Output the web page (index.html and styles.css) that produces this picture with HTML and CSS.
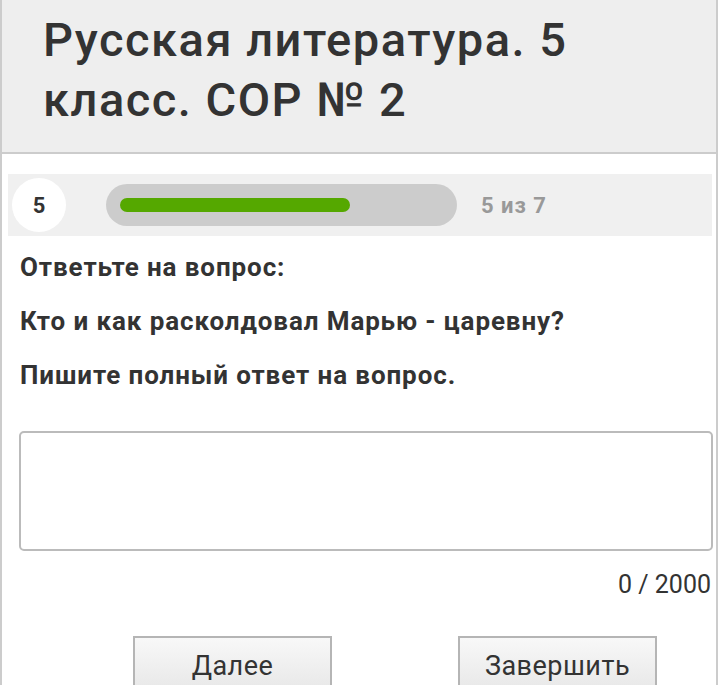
FILE: index.html
```html
<!DOCTYPE html>
<html lang="ru">
<head>
<meta charset="utf-8">
<link rel="stylesheet" href="styles.css">
</head>
<body>
<div class="page">
  <header class="head">
    <h1 class="title">Русская литература. 5 класс. СОР № 2</h1>
  </header>
  <main class="content">
    <div class="progress">
      <div class="num">5</div>
      <div class="track"><div class="fill" style="width:230px"></div></div>
      <div class="count">5 из 7</div>
    </div>
    <p class="q first">Ответьте на вопрос:</p>
    <p class="q">Кто и как расколдовал Марью - царевну?</p>
    <p class="q">Пишите полный ответ на вопрос.</p>
    <textarea class="answer"></textarea>
    <div class="counter">0 / 2000</div>
    <div class="buttons">
      <button class="btn">Далее</button>
      <button class="btn">Завершить</button>
    </div>
  </main>
</div>
</body>
</html>
```
FILE: styles.css
```css
html, body {
  margin: 0;
  padding: 0;
  background: #fff;
  height: 685px;
  overflow: hidden;
}
body {
  font-family: Roboto, "Liberation Sans", sans-serif;
  color: #333;
}
.page {
  width: 714px;
  min-height: 685px;
  border-left: 2px solid #ccc;
  border-right: 2px solid #ccc;
}
.head {
  background: #eee;
  border-bottom: 2px solid #ccc;
  height: 154px;
  box-sizing: border-box;
  padding: 10px 20px 0 41px;
}
.title {
  margin: 0;
  font-size: 47px;
  font-weight: 500;
  line-height: 60px;
  letter-spacing: 1.5px;
  color: #333;
  width: 600px;
}
.content {
  padding: 20px 4px 0 6px;
}
.progress {
  display: flex;
  align-items: center;
  background: #f0f0f0;
  height: 62px;
  padding: 0 4px;
}
.num {
  width: 54px;
  height: 54px;
  border-radius: 50%;
  background: #fff;
  display: flex;
  align-items: center;
  justify-content: center;
  font-weight: 700;
  font-size: 22px;
  color: #333;
}
.track {
  margin-left: 40px;
  width: 351px;
  height: 42px;
  border-radius: 21px;
  background: #ccc;
  display: flex;
  align-items: center;
  padding-left: 14px;
  box-sizing: border-box;
}
.fill {
  height: 14px;
  border-radius: 7px;
  background: #55a800;
}
.count {
  margin-left: 24px;
  font-weight: 700;
  font-size: 22px;
  letter-spacing: 1px;
  color: #999;
}
.q {
  margin: 0;
  padding-left: 12px;
  font-weight: 700;
  font-size: 26px;
  letter-spacing: 0.9px;
  line-height: 54px;
  color: #333;
}
.q.first {
  margin-top: 4px;
}
.answer {
  display: block;
  margin: 29px 0 0 11px;
  width: 694px;
  height: 120px;
  box-sizing: border-box;
  border: 2px solid #bbb;
  border-radius: 5px;
  resize: none;
  background: #fff;
}
.counter {
  text-align: right;
  font-size: 25px;
  line-height: 28px;
  margin-top: 20px;
  padding-right: 1px;
  color: #333;
}
.buttons {
  display: flex;
  margin-top: 37px;
  padding-left: 125px;
  gap: 126px;
}
.btn {
  width: 199px;
  height: 60px;
  box-sizing: border-box;
  border: 2px solid #b5b5b5;
  border-bottom: none;
  background: linear-gradient(#f8f8f8, #e6e6e6);
  font-family: Roboto, "Liberation Sans", sans-serif;
  font-size: 27px;
  letter-spacing: 0.5px;
  color: #333;
  padding: 0 0 2px 0;
  line-height: 30px;
  border-radius: 0;
}
```
